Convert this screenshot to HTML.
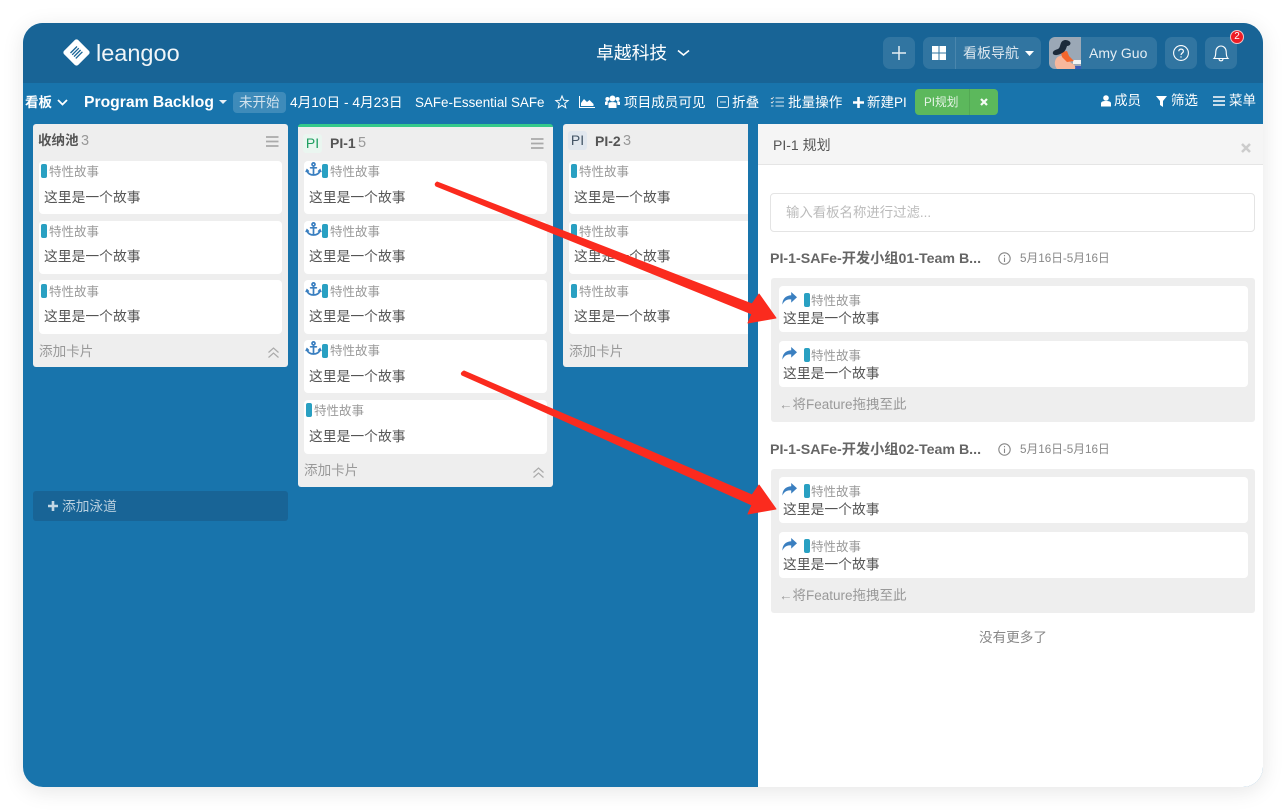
<!DOCTYPE html>
<html lang="zh"><head><meta charset="utf-8"><title>leangoo</title>
<style>
*{box-sizing:border-box}
html,body{margin:0;padding:0;width:1286px;height:810px;overflow:hidden;background:#fff}
body{font-family:"Liberation Sans","Noto Sans CJK SC",sans-serif;color:#555;position:relative}
#all{position:absolute;left:0;top:0;width:1286px;height:810px;filter:blur(.35px)}
.t{position:absolute;white-space:nowrap;line-height:20px;height:20px}
.b{position:absolute}
#win{position:absolute;left:23px;top:23px;width:1240px;height:764px;border-radius:20px;box-shadow:0 4px 22px rgba(0,0,0,.10)}
#clip{position:absolute;left:23px;top:23px;width:1240px;height:764px;border-radius:20px;background:#1874ac}
.w{color:#fff;font-size:13px}
.btn{position:absolute;top:37px;height:32px;background:rgba(255,255,255,.11);border-radius:7px}
.list{position:absolute;background:#eee;border-radius:3px}
.card{position:absolute;background:#fff;border-radius:4px;height:53px}
.bar{position:absolute;width:6px;height:14px;background:#29a0c2;border-radius:2px}
.tag{font-size:12.5px;color:#999}
.ttl{font-size:13.8px;color:#555}
.h{font-size:14px;font-weight:bold;color:#555}
.n{font-size:14.5px;color:#999}
.add{font-size:13.6px;color:#999}
.chip{position:absolute;width:19px;height:19px;border-radius:3px;font-size:14px;text-align:center;line-height:19px}
.gt{font-size:14.2px;font-weight:bold;color:#666}
.dt{font-size:11.7px;color:#888}
.box{position:absolute;left:771px;width:484px;height:144px;background:#eee;border-radius:3px}
.pc{position:absolute;left:779px;width:469px;height:46px;background:#fff;border-radius:4px}
.foot{font-size:13.5px;color:#999}
svg{position:absolute;overflow:visible}
</style></head><body>
<div id="all">
<svg width="0" height="0" style="position:absolute"><defs>
<g id="anchor" fill="none" stroke="#3a7fc0" stroke-width="1.7" stroke-linecap="round"><circle cx="7.5" cy="2.4" r="1.5"/><path d="M7.5 4V13M4.6 5.8H10.4M1 8.5C1.5 11.5 4.5 13 7.5 13S13.5 11.5 14 8.5"/><path d="M0 9.6L1 7.6L2.6 9.2M15 9.6L14 7.6L12.4 9.2" stroke-width="1.3"/></g>
<path id="share" fill="#3a7fc0" d="M9.2 0L15 5.3L9.2 10.6V7.4C5 7.2 2.4 8.3.4 12.6C.3 7 3.4 3.6 9.2 3.2Z"/>
<g id="ham" fill="none" stroke="#aaa" stroke-width="1.7"><path d="M0 1H12.5M0 5.5H12.5M0 10H12.5"/></g>
<g id="dbl" fill="none" stroke="#aaa" stroke-width="1.2"><path d="M.5 5.5L5.5 1L10.5 5.5M.5 10.5L5.5 6L10.5 10.5"/></g>
<g id="info" fill="none" stroke="#888" stroke-width="1.1"><circle cx="6.5" cy="6.5" r="5.7"/><path d="M6.5 5.6V10M6.5 3V4.3"/></g>
</defs></svg>

<div id="win"></div>
<div id="clip"></div>
<div class="b" style="left:23px;top:23px;width:1240px;height:60px;background:#186496;border-radius:20px 20px 0 0"></div>

<!-- logo -->
<svg style="left:62px;top:38px" width="29" height="29" viewBox="0 0 29 29"><rect x="4.5" y="4.5" width="20" height="20" rx="2.5" transform="rotate(45 14.5 14.5)" fill="#fff"/><g stroke="#186496" stroke-width="1.3"><path d="M8.5 15L15 8.5M10.2 16.800L16.800 10.200M12 18.600L18.600 12M13.800 20.400L20.400 13.800"/></g></svg>
<div class="t" style="left:96px;top:39px;height:28px;line-height:28px;font-size:23.5px;color:#f0f5f8">leangoo</div>

<!-- center title -->
<div class="t" style="left:596px;top:43px;font-size:17.8px;color:#fff">卓越科技</div>
<svg style="left:677px;top:49px" width="13" height="8"><path d="M1 1.5L6.5 6L12 1.5" fill="none" stroke="#fff" stroke-width="1.6"/></svg>

<!-- right header -->
<div class="btn" style="left:883px;width:32px"></div>
<svg style="left:892px;top:46px" width="14" height="14"><path d="M7 0V14M0 7H14" stroke="#e6eef4" stroke-width="1.5"/></svg>
<div class="btn" style="left:923px;width:118px"></div>
<div class="b" style="left:955px;top:37px;width:1px;height:32px;background:#4a86ad"></div>
<svg style="left:932px;top:46px" width="14" height="14" fill="#fff"><rect width="6.5" height="6.5"/><rect x="7.5" width="6.5" height="6.5"/><rect y="7.5" width="6.5" height="6.5"/><rect x="7.5" y="7.5" width="6.5" height="6.5"/></svg>
<div class="t" style="left:963px;top:43px;font-size:14px;color:#dbe6ee">看板导航</div>
<svg style="left:1025px;top:51px" width="9" height="5"><path d="M0 0H9L4.5 5Z" fill="#fff"/></svg>
<div class="btn" style="left:1049px;width:108px"></div>
<svg style="left:1049px;top:37px" width="32" height="32" viewBox="0 0 32 32"><path d="M6 0H32V32H6A6 6 0 0 1 0 26V6A6 6 0 0 1 6 0Z" fill="#9ba8b6"/><path d="M24 23H32V27H24Z" fill="#f4f4f4"/><path d="M22 29H32V32H22Z" fill="#3a5db8"/><path d="M8 32C4 27 6 20 11 19C14 18 19 21 22 26C25 27 27 29 26 32Z" fill="#f8b79c"/><path d="M12 15L18 14L20 19L25 24L18 25L13 20Z" fill="#f4662c"/><path d="M4 17C3 14 6 13 9 12C11 11 11 8 12 6C13 3 17 2 20 4C23 6 21 9 18 9C17 12 16 15 13 16C10 18 6 19 4 17Z" fill="#1c2a3a"/></svg>
<div class="t" style="left:1089px;top:43px;font-size:14px;color:#e4edf3">Amy Guo</div>
<div class="btn" style="left:1165px;width:32px"></div>
<svg style="left:1173px;top:45px" width="16" height="16" viewBox="0 0 16 16" fill="none" stroke="#fff" stroke-width="1.1"><circle cx="8" cy="8" r="7.4"/><path d="M5.8 6.2C5.8 3.4 10.4 3.4 10.4 6.2C10.4 8 8 8 8 10" stroke-width="1.2"/><path d="M8 11.3V12.6" stroke-width="1.2"/></svg>
<div class="btn" style="left:1205px;width:32px"></div>
<svg style="left:1213px;top:45px" width="16" height="17" viewBox="0 0 16 17" fill="none" stroke="#fff" stroke-width="1.1"><path d="M1 13.5C3 11.5 2.6 9 2.8 6.5C3 3 5.5 1 8 1S13 3 13.2 6.5C13.4 9 13 11.5 15 13.5Z"/><path d="M6 14C6.3 16.4 9.7 16.4 10 14"/></svg>
<div class="b" style="left:1230px;top:30px;width:14px;height:14px;border-radius:50%;background:#ee1c25;border:1px solid #f3c3c6;color:#fff;font-size:10px;line-height:12px;text-align:center">2</div>

<!-- toolbar -->
<div class="t w" style="left:25px;top:92.500px;font-size:13.500px;font-weight:bold">看板</div>
<svg style="left:57px;top:99px" width="11" height="7"><path d="M1 1L5.5 5.5L10 1" fill="none" stroke="#fff" stroke-width="1.8"/></svg>
<div class="t" style="left:84px;top:92.500px;font-size:15.700px;font-weight:bold;color:#fff">Program Backlog</div>
<svg style="left:219px;top:100px" width="8" height="4"><path d="M0 0H8L4 4Z" fill="#e8f0f6"/></svg>
<div class="b" style="left:233px;top:92px;width:53px;height:21px;border-radius:4px;background:rgba(255,255,255,.17)"></div>
<div class="t" style="left:239px;top:92.500px;font-size:13.500px;color:#d3e3ee">未开始</div>
<div class="t w" style="left:290px;top:92.500px;font-size:13.700px">4月10日 - 4月23日</div>
<div class="t w" style="left:415px;top:92.500px;font-size:13.400px">SAFe-Essential SAFe</div>
<svg style="left:555px;top:95px" width="14" height="14" viewBox="0 0 14 14"><path d="M7 1L8.7 5.2L13.2 5.5L9.7 8.4L10.8 12.8L7 10.4L3.2 12.8L4.3 8.4L.8 5.5L5.3 5.2Z" fill="none" stroke="#fff" stroke-width="1"/></svg>
<svg style="left:579px;top:96px" width="16" height="12" viewBox="0 0 16 12"><path d="M.5 0V11.5H16" fill="none" stroke="#fff" stroke-width="1"/><path d="M2 10V7L5 3L8 6L10.5 4L14.5 8V10Z" fill="#fff"/></svg>
<svg style="left:605px;top:95px" width="15" height="14" viewBox="0 0 15 14" fill="#fff"><circle cx="7.5" cy="3.5" r="3"/><circle cx="2.4" cy="4" r="2"/><circle cx="12.6" cy="4" r="2"/><path d="M3.5 8C4 6.8 11 6.8 11.500 8V13H3.500Z"/><path d="M0 7C1 6 2.500 6 3 6.500L2.500 10H0ZM15 7C14 6 12.500 6 12 6.500L12.500 10H15Z"/></svg>
<div class="t w" style="left:624px;top:92.500px;font-size:13.600px">项目成员可见</div>
<svg style="left:717px;top:96px" width="12" height="12" viewBox="0 0 12 12"><rect x=".5" y=".5" width="11" height="11" rx="2" fill="none" stroke="#e8f0f6"/><path d="M3 6H9" stroke="#e8f0f6"/></svg>
<div class="t w" style="left:732px;top:92.500px;font-size:13.600px">折叠</div>
<svg style="left:771px;top:97px" width="13" height="10" viewBox="0 0 13 10" stroke="#dce8f0"><path d="M4.500 1H13M4.500 5H13M4.500 9H13"/><path d="M0 1L1 2L2.500 0M0 5L1 6L2.500 4M0 9H2.500"/></svg>
<div class="t w" style="left:788px;top:92.500px;font-size:13.600px">批量操作</div>
<svg style="left:853px;top:97px" width="11" height="11"><path d="M5.500 0V11M0 5.500H11" stroke="#fff" stroke-width="2.600"/></svg>
<div class="t w" style="left:867px;top:92.500px;font-size:13.500px">新建PI</div>
<div class="b" style="left:915px;top:89px;width:83px;height:26px;background:#5cb85c;border-radius:4px"></div>
<div class="b" style="left:969px;top:89px;width:1px;height:26px;background:#53a953"></div>
<div class="t" style="left:924px;top:92.500px;font-size:11.700px;color:#e6f4e6">PI规划</div>
<svg style="left:980px;top:98px" width="8" height="8"><path d="M1 1L7 7M7 1L1 7" stroke="#f4fbf4" stroke-width="2.200"/></svg>
<svg style="left:1101px;top:95px" width="10" height="12" viewBox="0 0 10 12" fill="#fff"><circle cx="5" cy="3" r="2.800"/><path d="M0 11.500V8.500C0 6.500 2 6 5 6S10 6.500 10 8.500V11.500Z"/></svg>
<div class="t w" style="left:1114px;top:90.500px;font-size:13.500px">成员</div>
<svg style="left:1156px;top:96px" width="11" height="11"><path d="M0 0H11L7 5V11L4 9V5Z" fill="#fff"/></svg>
<div class="t w" style="left:1171px;top:90.500px;font-size:13.500px">筛选</div>
<svg style="left:1213px;top:96px" width="12" height="10"><path d="M0 1H12M0 5H12M0 9H12" stroke="#fff" stroke-width="1.500"/></svg>
<div class="t w" style="left:1229px;top:90.500px;font-size:13.500px">菜单</div>

<!-- column 1 -->
<div class="list" style="left:33px;top:124px;width:255px;height:243px"></div>
<div class="t h" style="left:38px;top:131px;font-size:13.500px">收纳池</div><div class="t n" style="left:81px;top:131px">3</div>
<svg style="left:266px;top:136px" width="13" height="11"><use href="#ham"/></svg>
<div class="card" style="left:39px;top:161px;width:243px"></div>
<div class="card" style="left:39px;top:221px;width:243px"></div>
<div class="card" style="left:39px;top:280px;width:243px;height:54px"></div>
<div class="bar" style="left:41px;top:164px"></div><div class="t tag" style="left:49px;top:162px">特性故事</div><div class="t ttl" style="left:44px;top:188px">这里是一个故事</div>
<div class="bar" style="left:41px;top:224px"></div><div class="t tag" style="left:49px;top:222px">特性故事</div><div class="t ttl" style="left:44px;top:247px">这里是一个故事</div>
<div class="bar" style="left:41px;top:284px"></div><div class="t tag" style="left:49px;top:282px">特性故事</div><div class="t ttl" style="left:44px;top:307px">这里是一个故事</div>
<div class="t add" style="left:39px;top:342px">添加卡片</div>
<svg style="left:268px;top:347px" width="11" height="11"><use href="#dbl"/></svg>

<!-- column 2 -->
<div class="list" style="left:298px;top:124px;width:255px;height:363px;border-top:3px solid #35c98b"></div>
<div class="chip" style="left:303px;top:134px;background:#eaf6f0;color:#1e9e60">PI</div>
<div class="t h" style="left:330px;top:133px">PI-1</div><div class="t n" style="left:358px;top:133px">5</div>
<svg style="left:531px;top:138px" width="13" height="11"><use href="#ham"/></svg>
<div class="card" style="left:304px;top:161px;width:243px"></div>
<div class="card" style="left:304px;top:221px;width:243px"></div>
<div class="card" style="left:304px;top:280px;width:243px;height:54px"></div>
<div class="card" style="left:304px;top:340px;width:243px"></div>
<div class="card" style="left:304px;top:400px;width:243px;height:54px"></div>
<svg style="left:306px;top:162px" width="15" height="15"><use href="#anchor"/></svg><div class="bar" style="left:322px;top:164px"></div><div class="t tag" style="left:330px;top:162px">特性故事</div><div class="t ttl" style="left:309px;top:188px">这里是一个故事</div>
<svg style="left:306px;top:222px" width="15" height="15"><use href="#anchor"/></svg><div class="bar" style="left:322px;top:224px"></div><div class="t tag" style="left:330px;top:222px">特性故事</div><div class="t ttl" style="left:309px;top:247px">这里是一个故事</div>
<svg style="left:306px;top:282px" width="15" height="15"><use href="#anchor"/></svg><div class="bar" style="left:322px;top:284px"></div><div class="t tag" style="left:330px;top:282px">特性故事</div><div class="t ttl" style="left:309px;top:307px">这里是一个故事</div>
<svg style="left:306px;top:341px" width="15" height="15"><use href="#anchor"/></svg><div class="bar" style="left:322px;top:344px"></div><div class="t tag" style="left:330px;top:341px">特性故事</div><div class="t ttl" style="left:309px;top:367px">这里是一个故事</div>
<div class="bar" style="left:306px;top:403px"></div><div class="t tag" style="left:314px;top:401px">特性故事</div><div class="t ttl" style="left:309px;top:427px">这里是一个故事</div>
<div class="t add" style="left:304px;top:461px">添加卡片</div>
<svg style="left:533px;top:467px" width="11" height="11"><use href="#dbl"/></svg>

<!-- column 3 -->
<div class="list" style="left:563px;top:124px;width:185px;height:243px;border-radius:3px 0 0 3px"></div>
<div class="chip" style="left:568px;top:131px;background:#e1e7ee;color:#445566">PI</div>
<div class="t h" style="left:595px;top:131px">PI-2</div><div class="t n" style="left:623px;top:131px">3</div>
<div class="card" style="left:569px;top:161px;width:179px;border-radius:4px 0 0 4px"></div>
<div class="card" style="left:569px;top:221px;width:179px;border-radius:4px 0 0 4px"></div>
<div class="card" style="left:569px;top:280px;width:179px;height:54px;border-radius:4px 0 0 4px"></div>
<div class="bar" style="left:571px;top:164px"></div><div class="t tag" style="left:579px;top:162px">特性故事</div><div class="t ttl" style="left:574px;top:188px">这里是一个故事</div>
<div class="bar" style="left:571px;top:224px"></div><div class="t tag" style="left:579px;top:222px">特性故事</div><div class="t ttl" style="left:574px;top:247px">这里是一个故事</div>
<div class="bar" style="left:571px;top:284px"></div><div class="t tag" style="left:579px;top:282px">特性故事</div><div class="t ttl" style="left:574px;top:307px">这里是一个故事</div>
<div class="t add" style="left:569px;top:342px">添加卡片</div>

<!-- add lane -->
<div class="b" style="left:33px;top:491px;width:255px;height:30px;background:#186496;border-radius:3px"></div>
<svg style="left:48px;top:501px" width="10" height="10"><path d="M5 0V10M0 5H10" stroke="#c3d7e4" stroke-width="2.600"/></svg>
<div class="t" style="left:62px;top:496.500px;font-size:13.700px;color:#b9d0df">添加泳道</div>

<!-- panel -->
<div class="b" style="left:758px;top:124px;width:505px;height:663px;background:#fff;border-radius:0 0 20px 0"></div>
<div class="b" style="left:758px;top:124px;width:505px;height:41px;background:#f5f5f5;border-bottom:1px solid #e5e5e5"></div>
<div class="t" style="left:773px;top:135px;font-size:14px;color:#555">PI-1 规划</div>
<svg style="left:1241px;top:143px" width="10" height="10"><path d="M1 1L9 9M9 1L1 9" stroke="#ccc" stroke-width="2.500"/></svg>
<div class="b" style="left:770px;top:193px;width:485px;height:39px;border:1px solid #e4e4e4;border-radius:4px"></div>
<div class="t" style="left:786px;top:202.500px;font-size:13.400px;color:#bbb">输入看板名称进行过滤...</div>

<div class="t gt" style="left:770px;top:249px">PI-1-SAFe-开发小组01-Team B...</div>
<svg style="left:998px;top:252px" width="13" height="13"><use href="#info"/></svg>
<div class="t dt" style="left:1020px;top:249px">5月16日-5月16日</div>
<div class="box" style="top:278px"></div>
<div class="pc" style="top:286px"></div><div class="pc" style="top:341px"></div>
<svg style="left:782px;top:292px" width="15" height="13"><use href="#share"/></svg><div class="bar" style="left:804px;top:293px"></div><div class="t tag" style="left:811px;top:291px">特性故事</div><div class="t ttl" style="left:783px;top:309px">这里是一个故事</div>
<svg style="left:782px;top:347px" width="15" height="13"><use href="#share"/></svg><div class="bar" style="left:804px;top:348px"></div><div class="t tag" style="left:811px;top:346px">特性故事</div><div class="t ttl" style="left:783px;top:364px">这里是一个故事</div>
<div class="t foot" style="left:779px;top:395px">←将Feature拖拽至此</div>

<div class="t gt" style="left:770px;top:440px">PI-1-SAFe-开发小组02-Team B...</div>
<svg style="left:998px;top:443px" width="13" height="13"><use href="#info"/></svg>
<div class="t dt" style="left:1020px;top:440px">5月16日-5月16日</div>
<div class="box" style="top:469px"></div>
<div class="pc" style="top:477px"></div><div class="pc" style="top:532px"></div>
<svg style="left:782px;top:483px" width="15" height="13"><use href="#share"/></svg><div class="bar" style="left:804px;top:484px"></div><div class="t tag" style="left:811px;top:482px">特性故事</div><div class="t ttl" style="left:783px;top:500px">这里是一个故事</div>
<svg style="left:782px;top:538px" width="15" height="13"><use href="#share"/></svg><div class="bar" style="left:804px;top:539px"></div><div class="t tag" style="left:811px;top:537px">特性故事</div><div class="t ttl" style="left:783px;top:555px">这里是一个故事</div>
<div class="t foot" style="left:779px;top:586px">←将Feature拖拽至此</div>

<div class="t" style="left:979px;top:628px;font-size:13.600px;color:#888">没有更多了</div>

<!-- arrows -->
<svg style="left:0;top:0" width="1286" height="810" viewBox="0 0 1286 810">
<path fill="#fb2b1e" stroke="#fb2b1e" stroke-width="1" stroke-linejoin="round" d="M437 182L752 304L759 294L776 318L748 323L752 314L436 186Q434 184 437 182Z"/>
<path fill="#fb2b1e" stroke="#fb2b1e" stroke-width="1" stroke-linejoin="round" d="M464 371L752 495L759 485L776 509L748 514L752 505L462 375Q460 373 464 371Z"/>
</svg>
</div>
</body></html>
